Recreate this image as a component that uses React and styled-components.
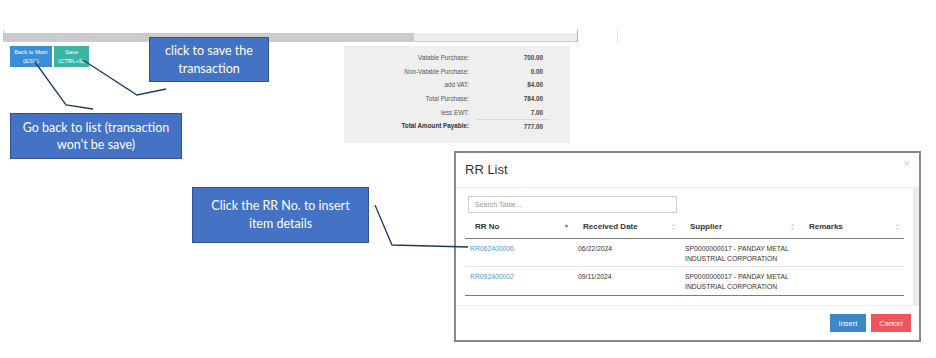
import React from 'react';
import styled, { createGlobalStyle } from 'styled-components';

const Global = createGlobalStyle`
  html, body { margin: 0; padding: 0; background: #fff; }
  body { font-family: "Liberation Sans", Arial, sans-serif; }
  * { box-sizing: border-box; }
`;

const Page = styled.div`
  position: relative;
  width: 936px;
  height: 358px;
  overflow: hidden;
  background: #fff;
  padding-top: 30px;
`;

const ScrollFrame = styled.div`
  margin-left: 3px;
  width: 575px;
  height: 12px;
  border-left: 1px solid #c8c8c8;
  border-right: 1px solid #b0b0b0;
  display: flex;
  align-items: flex-end;
`;

const HScroll = styled.div`
  flex: 1;
  height: 9px;
  display: flex;
  background: #ededed;
  border-bottom: 1px solid #cfcfcf;
`;

const HThumb = styled.div`
  width: 410px;
  background: #cbcbcb;
`;

const ActionRow = styled.div`
  width: 570px;
  margin-top: 4px;
  padding-left: 10px;
  display: flex;
  justify-content: space-between;
  align-items: flex-start;
`;

const ButtonGroup = styled.div`
  display: flex;
  gap: 2px;
`;

const SmallButton = styled.div`
  width: ${p => p.$w}px;
  height: 21px;
  background: ${p => p.$bg};
  color: #fff;
  font-size: 5.8px;
  line-height: 8.5px;
  white-space: nowrap;
  text-align: center;
  display: flex;
  flex-direction: column;
  align-items: center;
  justify-content: center;
`;

const Summary = styled.div`
  width: 226px;
  height: 97px;
  background: #efefef;
  padding-top: 5px;
  display: grid;
  grid-template-columns: 125px 74px;
  column-gap: 7px;
  grid-auto-rows: 13.6px;
  align-content: start;
  font-size: 6.3px;
  color: #444;
`;

const SumLabel = styled.div`
  display: flex;
  align-items: center;
  justify-content: flex-end;
  font-weight: ${p => (p.$bold ? 'bold' : 'normal')};
  color: ${p => (p.$bold ? '#333' : '#555')};
`;

const SumValue = styled.div`
  display: flex;
  align-items: center;
  justify-content: flex-end;
  padding-right: 7px;
  font-weight: bold;
  color: #444;
  border-top: ${p => (p.$line ? '1px solid #d9d9d9' : 'none')};
`;

const Callout = styled.div`
  position: absolute;
  left: ${p => p.$x}px;
  top: ${p => p.$y}px;
  width: ${p => p.$w}px;
  height: ${p => p.$h}px;
  background: #4472c4;
  border: 1.5px solid #2f528f;
  color: #fff;
  font-family: Lato, "Open Sans", sans-serif;
  font-size: 12.5px;
  line-height: ${p => p.$lh}px;
  text-align: center;
  display: flex;
  align-items: center;
  justify-content: center;
`;

const Connectors = styled.svg`
  position: absolute;
  left: 0;
  top: 0;
  pointer-events: none;
`;

const StrayTick = styled.div`
  position: absolute;
  left: 617px;
  top: 30px;
  width: 1px;
  height: 14px;
  background: #dde6f3;
`;

const Modal = styled.div`
  position: absolute;
  left: 454px;
  top: 151px;
  width: 467px;
  height: 191px;
  border: 2px solid #878787;
  background: #fff;
  display: flex;
  flex-direction: column;
`;

const ModalHeader = styled.div`
  flex: none;
  height: 35px;
  border-bottom: 1px solid #ededed;
  padding: 0 9px 0 9px;
  display: flex;
  justify-content: space-between;
  align-items: center;
`;

const Title = styled.h4`
  margin: -2px 0 0 0;
  font-size: 13px;
  font-weight: normal;
  color: #333;
`;

const Close = styled.span`
  align-self: flex-start;
  margin-top: 4px;
  font-size: 11px;
  color: #cfcfcf;
`;

const ModalBody = styled.div`
  flex: 1;
  display: flex;
  overflow: hidden;
`;

const BodyContent = styled.div`
  flex: 1;
  padding: 8px 8px 0 9px;
`;

const VScroll = styled.div`
  width: 6px;
  background: #ebebeb;
`;

const Search = styled.div`
  margin-left: 3px;
  width: 209px;
  height: 17px;
  border: 1px solid #cccccc;
  padding-left: 6px;
  font-size: 7px;
  color: #999;
  display: flex;
  align-items: center;
`;

const Table = styled.table`
  margin-top: 3px;
  width: 439px;
  border-collapse: collapse;
  table-layout: fixed;
`;

const Th = styled.th`
  width: ${p => p.$w}px;
  height: 22px;
  padding: 0 4px 0 10px;
  text-align: left;
  font-size: 8px;
  font-weight: bold;
  color: #333;
  border-bottom: 1.5px solid #7a7a7a;
`;

const ThInner = styled.div`
  display: flex;
  justify-content: space-between;
  align-items: center;
`;

const Td = styled.td`
  height: ${p => p.$h}px;
  padding: 5px 5px 0 5px;
  vertical-align: top;
  font-size: 6.8px;
  line-height: 10px;
  color: ${p => (p.$link ? '#5596d4' : '#333')};
  border-bottom: ${p => (p.$last ? '1.5px solid #7a7a7a' : '1px solid #e3e3e3')};
`;

const ModalFooter = styled.div`
  flex: none;
  height: 35px;
  border-top: 1px solid #ececec;
  padding-right: 8px;
  display: flex;
  justify-content: flex-end;
  align-items: center;
  gap: 5px;
`;

const FooterButton = styled.div`
  width: ${p => p.$w}px;
  height: 18px;
  background: ${p => p.$bg};
  color: #fff;
  font-size: 7.5px;
  display: flex;
  align-items: center;
  justify-content: center;
`;

const SortIcon = ({ active }) => (
  <svg width="5" height="8" viewBox="0 0 5 8">
    {active ? (
      <path d="M2.5 1 L4.5 4 L0.5 4 Z" fill="#7779d9" />
    ) : (
      <>
        <path d="M2.5 0.5 L4.3 3 L0.7 3 Z" fill="#d8d8d8" />
        <path d="M2.5 7.5 L4.3 5 L0.7 5 Z" fill="#d8d8d8" />
      </>
    )}
  </svg>
);

const summaryRows = [
  ['Vatable Purchase:', '700.00'],
  ['Non-Vatable Purchase:', '0.00'],
  ['add VAT:', '84.00'],
  ['Total Purchase:', '784.00'],
  ['less EWT:', '7.00'],
];

const rrRows = [
  { no: 'RR062400006', date: '06/22/2024', h: 28 },
  { no: 'RR092400002', date: '09/11/2024', h: 29, last: true },
];

export default function App() {
  return (
    <>
      <Global />
      <Page>
        <ScrollFrame>
          <HScroll>
            <HThumb />
          </HScroll>
        </ScrollFrame>

        <ActionRow>
          <ButtonGroup>
            <SmallButton $w={42} $bg="#3b8dd4">
              <span>Back to Main</span>
              <span>(ESC)</span>
            </SmallButton>
            <SmallButton $w={35} $bg="#3bb5a3">
              <span>Save</span>
              <span>(CTRL+S)</span>
            </SmallButton>
          </ButtonGroup>

          <Summary>
            {summaryRows.map(([l, v]) => (
              <React.Fragment key={l}>
                <SumLabel>{l}</SumLabel>
                <SumValue>{v}</SumValue>
              </React.Fragment>
            ))}
            <SumLabel $bold>Total Amount Payable:</SumLabel>
            <SumValue $line>777.00</SumValue>
          </Summary>
        </ActionRow>

        <StrayTick />

        <Modal>
          <ModalHeader>
            <Title>RR List</Title>
            <Close>×</Close>
          </ModalHeader>
          <ModalBody>
            <BodyContent>
              <Search>Search Table...</Search>
              <Table>
                <thead>
                  <tr>
                    <Th $w={108}>
                      <ThInner>RR No<SortIcon active /></ThInner>
                    </Th>
                    <Th $w={107}>
                      <ThInner>Received Date<SortIcon /></ThInner>
                    </Th>
                    <Th $w={119}>
                      <ThInner>Supplier<SortIcon /></ThInner>
                    </Th>
                    <Th $w={105}>
                      <ThInner>Remarks<SortIcon /></ThInner>
                    </Th>
                  </tr>
                </thead>
                <tbody>
                  {rrRows.map(r => (
                    <tr key={r.no}>
                      <Td $h={r.h} $link $last={r.last}>{r.no}</Td>
                      <Td $h={r.h} $last={r.last}>{r.date}</Td>
                      <Td $h={r.h} $last={r.last}>
                        SP0000000017 - PANDAY METAL
                        <br />
                        INDUSTRIAL CORPORATION
                      </Td>
                      <Td $h={r.h} $last={r.last}></Td>
                    </tr>
                  ))}
                </tbody>
              </Table>
            </BodyContent>
            <VScroll />
          </ModalBody>
          <ModalFooter>
            <FooterButton $w={36} $bg="#3b87c9">Insert</FooterButton>
            <FooterButton $w={40} $bg="#f0555f">Cancel</FooterButton>
          </ModalFooter>
        </Modal>

        <Callout $x={149} $y={37} $w={120} $h={45} $lh={18}>
          click to save the
          <br />
          transaction
        </Callout>
        <Callout $x={10} $y={113} $w={172} $h={46} $lh={17}>
          Go back to list (transaction
          <br />
          won’t be save)
        </Callout>
        <Callout $x={192} $y={187} $w={177} $h={56} $lh={18}>
          Click the RR No. to insert
          <br />
          item details
        </Callout>

        <Connectors width="936" height="358" viewBox="0 0 936 358">
          <g fill="none" stroke="#1f3864" strokeWidth="1.3">
            <path d="M35 62 L66 105 L93 109" />
            <path d="M83 60 L137 95 L166 89" />
            <path d="M375 205 L392 245 L468 247" />
          </g>
        </Connectors>
      </Page>
    </>
  );
}
